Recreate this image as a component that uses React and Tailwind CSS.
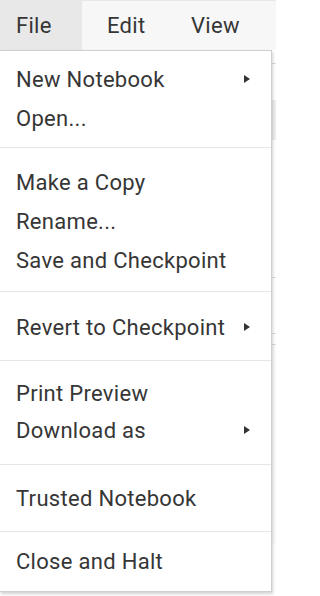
import React from "react";

function Arrow() {
  return (
    <svg width="6" height="8" viewBox="0 0 6 8" className="ml-auto mr-[21px] mb-[1px] shrink-0">
      <path d="M0 0 L6 4 L0 8 Z" fill="#333333" />
    </svg>
  );
}

function Item({ label, arrow, h = "h-[39px]" }) {
  return (
    <div className={`flex items-center pl-[16px] ${h} text-[22px] tracking-[0.3px] text-[#363636] whitespace-nowrap`}>
      <span>{label}</span>
      {arrow && <Arrow />}
    </div>
  );
}

function Sep({ cls }) {
  return <div className={`h-px bg-[#e6e6e6] ${cls}`} />;
}

export default function App() {
  return (
    <div
      className="w-[276px] h-[596px] overflow-hidden bg-white relative"
      style={{ fontFamily: "Roboto, 'Noto Sans', Arial, sans-serif" }}
    >
      {/* menu bar */}
      <div className="flex h-[50px] bg-[#f7f7f7] border-t border-[#e8e8e8] text-[22px] tracking-[0.3px] leading-[49px] text-[#363636]">
        <div className="w-[82px] pl-[16px] bg-[#e8e8e8]">File</div>
        <div className="w-[84px] pl-[25px]">Edit</div>
        <div className="pl-[25px]">View</div>
      </div>

      {/* background notebook content */}
      <div className="relative h-[546px]">
        <div className="flex flex-col">
          <div className="h-[13px]" />
          <div className="h-[37px] border-t border-[#dddddd]" />
          <div className="h-[40px] bg-[#eeeeee]" />
          <div className="h-[138px] border-b border-[#dddddd]" />
          <div className="h-[56px] border-b border-[#dddddd]" />
          <div className="h-[10px]" />
          <div className="h-[200px] border-t border-[#dddddd] bg-[#fafafa]" />
        </div>

        {/* dropdown */}
        <div className="absolute top-0 left-0 w-[272px] bg-white border-t border-r border-b border-[#cfcfcf] shadow-[1px_2px_3px_rgba(0,0,0,0.18)] pt-[9px] pb-[10px]">
          <Item label="New Notebook" arrow />
          <Item label="Open..." />
          <Sep cls="mt-[9px] mb-[15px]" />
          <Item label="Make a Copy" />
          <Item label="Rename..." />
          <Item label="Save and Checkpoint" />
          <Sep cls="mt-[11px] mb-[16px]" />
          <Item label="Revert to Checkpoint" arrow />
          <Sep cls="mt-[13px] mb-[15px]" />
          <Item label="Print Preview" h="h-[35px]" />
          <Item label="Download as" arrow />
          <Sep cls="mt-[14px] mb-[14px]" />
          <Item label="Trusted Notebook" />
          <Sep cls="mt-[13px] mb-[10px]" />
          <Item label="Close and Halt" />
        </div>
      </div>
    </div>
  );
}
